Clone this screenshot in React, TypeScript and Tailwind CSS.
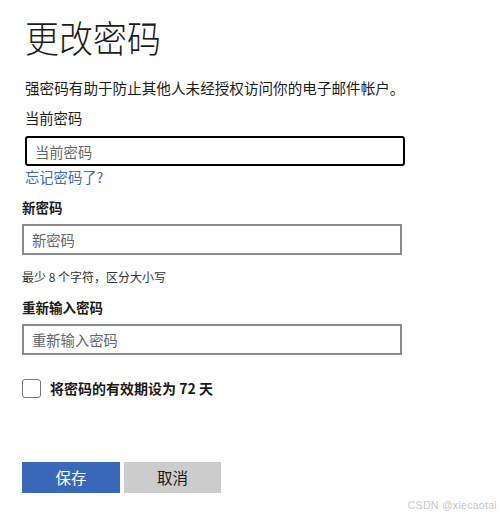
import React from 'react';

const font = { fontFamily: '"Noto Sans CJK SC", "Noto Sans", sans-serif' };

const App: React.FC = () => {
  return (
    <div className="w-[500px] h-[518px] bg-white relative overflow-hidden text-[#1b1b1b] font-['Noto_Sans_CJK_SC','Noto_Sans',sans-serif]" style={font}>
      <div className="pl-[25px] pt-[14px] w-[405px]">
        <h1 className="text-[34px] font-light leading-[42px] scale-y-110 origin-top">更改密码</h1>
        <p className="mt-[22px] text-[14.6px] leading-[20px]">强密码有助于防止其他人未经授权访问你的电子邮件帐户。</p>
        <p className="mt-[10px] text-[14.3px] leading-[20px]">当前密码</p>
        <input
          type="password"
          placeholder="当前密码"
          className="mt-[8px] w-[380px] h-[30px] border-2 border-black rounded-[3px] px-[8px] text-[14.3px] placeholder:text-[#666] outline-none"
        />
        <a className="block mt-[1px] text-[14.3px] leading-[20px] text-[#3b6bb2]">忘记密码了?</a>
      </div>

      <div className="pl-[22px] w-[405px]">
        <p className="mt-[10px] text-[13.5px] font-bold leading-[20px]">新密码</p>
        <input
          type="password"
          placeholder="新密码"
          className="mt-[7px] w-[380px] h-[31px] border-2 border-[#8a8a8a] px-[8px] text-[14.3px] placeholder:text-[#666] outline-none"
        />
        <p className="mt-[13px] text-[12px] leading-[18px] text-[#333]">最少 8 个字符，区分大小写</p>
        <p className="mt-[11px] text-[13.5px] font-bold leading-[20px]">重新输入密码</p>
        <input
          type="password"
          placeholder="重新输入密码"
          className="mt-[7px] w-[380px] h-[31px] border-2 border-[#8a8a8a] px-[8px] text-[14.3px] placeholder:text-[#666] outline-none"
        />
        <label className="mt-[23px] flex items-center gap-[9px]">
          <span className="w-[19px] h-[19px] border border-[#777] rounded-[3px] bg-white" />
          <span className="text-[14px] font-bold leading-[20px]">将密码的有效期设为 72 天</span>
        </label>
        <div className="mt-[64px] flex gap-[4px]">
          <button className="w-[98px] h-[31px] bg-[#3a68b8] text-white text-[15.5px]">保存</button>
          <button className="w-[97px] h-[31px] bg-[#cccccc] text-[#1b1b1b] text-[15.5px]">取消</button>
        </div>
      </div>

      <span className="absolute right-[3px] bottom-[4px] text-[10.5px] tracking-[0.3px] text-[#c8c8c8] font-['Liberation_Sans',sans-serif]">CSDN @xiecaotai</span>
    </div>
  );
};

export default App;
